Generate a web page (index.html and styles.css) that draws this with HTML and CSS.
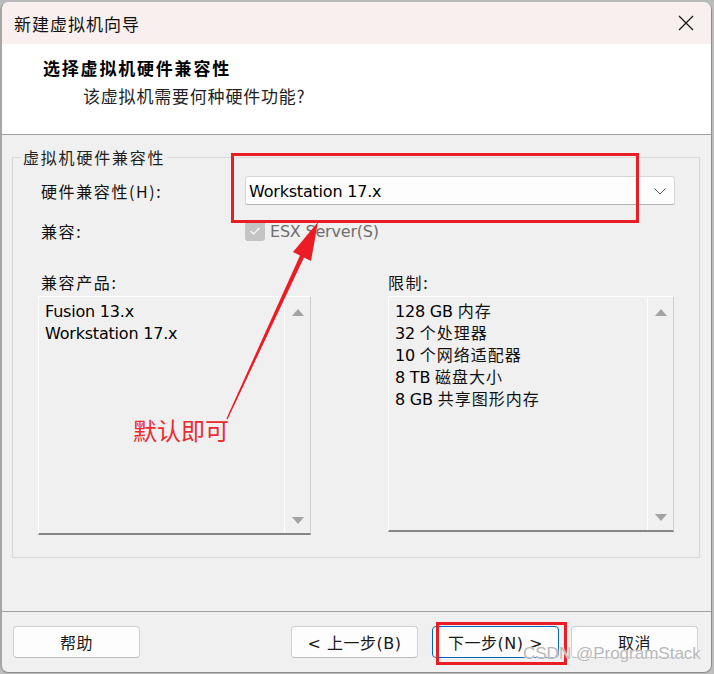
FILE: index.html
```html
<!DOCTYPE html>
<html lang="zh-CN">
<head>
<meta charset="utf-8">
<title>新建虚拟机向导</title>
<link rel="stylesheet" href="styles.css">
</head>
<body>
<div class="backdrop"></div>
<div class="window">
  <div class="titlebar">
    <span class="title">新建虚拟机向导</span>
    <svg class="close" width="16" height="16" viewBox="0 0 16 16"><path d="M1 1 L15 15 M15 1 L1 15" stroke="#1a1a1a" stroke-width="1.3" fill="none"/></svg>
  </div>
  <div class="header">
    <div class="heading">选择虚拟机硬件兼容性</div>
    <div class="subheading">该虚拟机需要何种硬件功能?</div>
  </div>
  <div class="content">
    <div class="group">
      <span class="legend">虚拟机硬件兼容性</span>
      <div class="row row-combo">
        <span class="label">硬件兼容性(H):</span>
        <div class="combo">
          <span class="combo-text">Workstation 17.x</span>
          <svg class="chev" width="12" height="7" viewBox="0 0 12 7"><path d="M0.5 0.5 L6 6 L11.5 0.5" stroke="#555" stroke-width="1" fill="none"/></svg>
        </div>
      </div>
      <div class="row row-check">
        <span class="label">兼容:</span>
        <span class="checkbox"><svg width="12" height="10" viewBox="0 0 12 10"><path d="M1.5 5 L4.5 8 L10.5 2" stroke="#fff" stroke-width="1.2" fill="none"/></svg></span>
        <span class="check-label">ESX Server(S)</span>
      </div>
      <div class="row row-labels">
        <span class="label label-left">兼容产品:</span>
        <span class="label">限制:</span>
      </div>
      <div class="row row-lists">
        <div class="list list-left">
          <div class="list-items">
            <div class="item">Fusion 13.x</div>
            <div class="item">Workstation 17.x</div>
          </div>
          <div class="scroll">
            <span class="arrow up"></span>
            <span class="arrow down"></span>
          </div>
        </div>
        <div class="list list-right">
          <div class="list-items">
            <div class="item">128 GB <span class="cjk">内存</span></div>
            <div class="item">32 <span class="cjk">个处理器</span></div>
            <div class="item">10 <span class="cjk">个网络适配器</span></div>
            <div class="item">8 TB <span class="cjk">磁盘大小</span></div>
            <div class="item">8 GB <span class="cjk">共享图形内存</span></div>
          </div>
          <div class="scroll">
            <span class="arrow up"></span>
            <span class="arrow down"></span>
          </div>
        </div>
      </div>
    </div>
  </div>
  <div class="footer">
    <button class="btn">帮助</button>
    <div class="spacer"></div>
    <button class="btn btn-prev">&lt; 上一步(B)</button>
    <button class="btn btn-default">下一步(N) &gt;</button>
    <button class="btn btn-cancel">取消</button>
  </div>
</div>

<div class="mark mark-combo"></div>
<div class="mark mark-next"></div>
<svg class="arrow-overlay" width="714" height="674" viewBox="0 0 714 674">
  <polygon points="318,222 311,261 304,257.5 227.5,419.5 226.5,418.5 300,255.5 293,252" fill="#ec1c24"/>
</svg>
<div class="note">默认即可</div>
<div class="watermark">CSDN @ProgramStack</div>
</body>
</html>
```
FILE: styles.css
```css
html, body {
  margin: 0;
  padding: 0;
}
body {
  width: 714px;
  height: 674px;
  background: #bdbdbd;
  position: relative;
  overflow: hidden;
  font-family: "DejaVu Sans", "Noto Sans CJK SC", sans-serif;
  color: #000;
}
.backdrop {
  height: 2px;
  background: #b9b9b9;
}
.window {
  width: 712px;
  height: 671px;
  border-left: 2px solid #a6a6a6;
  border-right: 1px solid #8c8c8c;
  border-bottom: 1px solid #8c8c8c;
  border-radius: 8px;
  background: #f0f0f0;
  overflow: hidden;
  display: flex;
  flex-direction: column;
  box-sizing: border-box;
}
.titlebar {
  height: 42px;
  flex: none;
  background: #f9efee;
  display: flex;
  align-items: center;
  justify-content: space-between;
  padding: 0 17px 0 12px;
}
.title {
  font-family: "Noto Sans CJK SC", sans-serif;
  font-size: 17px;
  letter-spacing: 1px;
  color: #111;
}
.close {
  display: block;
}
.header {
  flex: none;
  background: #fff;
  border-bottom: 1px solid #a0a0a0;
  box-sizing: border-box;
  height: 91px;
  padding-top: 13px;
}
.heading {
  font-family: "Noto Sans CJK SC", sans-serif;
  font-weight: bold;
  font-size: 17px;
  letter-spacing: 1.8px;
  line-height: 22px;
  margin-left: 41px;
}
.subheading {
  font-family: "Noto Sans CJK SC", sans-serif;
  font-size: 17px;
  letter-spacing: 0.8px;
  line-height: 22px;
  margin-top: 6px;
  margin-left: 81px;
  color: #222;
}
.content {
  height: 477px;
  flex: none;
  border-bottom: 1px solid #a0a0a0;
  box-sizing: border-box;
  padding-top: 22px;
}
.group {
  position: relative;
  margin-left: 10px;
  width: 688px;
  height: 401px;
  box-sizing: border-box;
  border: 1px solid #d9d9d9;
}
.legend {
  position: absolute;
  left: 8px;
  top: -11px;
  padding: 0 2px;
  background: #f0f0f0;
  font-family: "Noto Sans CJK SC", sans-serif;
  font-size: 16px;
  letter-spacing: 1.8px;
  line-height: 20px;
  color: #222;
}
.row {
  display: flex;
  align-items: center;
}
.label {
  font-family: "Noto Sans CJK SC", sans-serif;
  font-size: 16px;
  letter-spacing: 1.6px;
  color: #111;
  line-height: 20px;
}
.row-combo {
  margin-top: 18px;
  height: 29px;
}
.row-combo .label,
.row-check .label {
  width: 204px;
  padding-left: 28px;
}
.combo {
  width: 430px;
  height: 29px;
  box-sizing: border-box;
  background: #fdfdfd;
  border: 1px solid #d6d6d6;
  border-bottom-color: #b3b3b3;
  border-radius: 3px;
  display: flex;
  align-items: center;
  justify-content: space-between;
  padding: 1px 8px 0 3px;
}
.combo-text {
  font-size: 16px;
  letter-spacing: -0.2px;
}
.chev {
  display: block;
}
.row-check {
  margin-top: 16px;
  height: 20px;
}
.checkbox {
  width: 20px;
  height: 20px;
  box-sizing: border-box;
  background: #c4c4c4;
  border-radius: 3px;
  display: flex;
  align-items: center;
  justify-content: center;
}
.check-label {
  margin-left: 5px;
  font-size: 16px;
  color: #6e6e6e;
  letter-spacing: -0.2px;
}
.row-labels {
  margin-top: 31px;
  height: 20px;
}
.label-left {
  width: 347px;
  padding-left: 28px;
}
.row-lists {
  margin-top: 4px;
  align-items: flex-start;
}
.list {
  display: flex;
  box-sizing: border-box;
  border-top: 1px solid #fff;
  border-left: 1px solid #fff;
  border-right: 1px solid #d0d0d0;
  border-bottom: 2px solid #868686;
  background: #f0f0f0;
}
.list-left {
  margin-left: 25px;
  width: 273px;
  height: 239px;
}
.list-right {
  margin-left: 77px;
  width: 286px;
  height: 236px;
}
.list-items {
  flex: 1;
  padding: 4px 0 0 6px;
  border-right: 1px solid #fff;
}
.item {
  height: 22px;
  font-size: 16px;
  line-height: 22px;
  letter-spacing: -0.2px;
  white-space: nowrap;
}
.cjk {
  font-family: "Noto Sans CJK SC", sans-serif;
  letter-spacing: 1px;
  color: #111;
  line-height: 1;
}
.scroll {
  width: 25px;
  flex: none;
  display: flex;
  flex-direction: column;
  justify-content: space-between;
  align-items: center;
  padding: 12px 0 9px;
  box-sizing: border-box;
}
.arrow {
  width: 0;
  height: 0;
  border-left: 6px solid transparent;
  border-right: 6px solid transparent;
}
.arrow.up {
  border-bottom: 7px solid #a3a3a3;
}
.arrow.down {
  border-top: 7px solid #a3a3a3;
}
.footer {
  flex: 1;
  display: flex;
  align-items: flex-start;
  padding: 14px 0 0 11px;
}
.spacer {
  width: 151px;
}
.btn {
  width: 127px;
  height: 32px;
  box-sizing: border-box;
  background: #fdfdfd;
  border: 1px solid #d0d0d0;
  border-bottom-color: #bdbdbd;
  border-radius: 4px;
  font-family: "DejaVu Sans", "Noto Sans CJK SC", sans-serif;
  font-size: 16px;
  color: #1a1a1a;
  padding: 0;
  letter-spacing: 0.5px;
}
.btn-default {
  border: 1px solid #0067c0;
  margin-left: 14px;
}
.btn-cancel {
  margin-left: 12px;
}
.mark {
  position: absolute;
  border: 3px solid #ec1c24;
  box-sizing: border-box;
}
.mark-combo {
  left: 231px;
  top: 153px;
  width: 408px;
  height: 70px;
}
.mark-next {
  left: 436px;
  top: 622px;
  width: 131px;
  height: 43px;
}
.arrow-overlay {
  position: absolute;
  left: 0;
  top: 0;
  pointer-events: none;
}
.note {
  position: absolute;
  left: 133px;
  top: 413px;
  font-family: "Noto Sans CJK SC", sans-serif;
  font-size: 24px;
  line-height: 34px;
  color: #ec2a2f;
}
.watermark {
  position: absolute;
  left: 523px;
  top: 644px;
  font-family: "Liberation Sans", sans-serif;
  font-size: 17px;
  color: #b8b8b8;
  text-shadow: 0 0 2px #fff, 0 0 1px #fff;
}
```
